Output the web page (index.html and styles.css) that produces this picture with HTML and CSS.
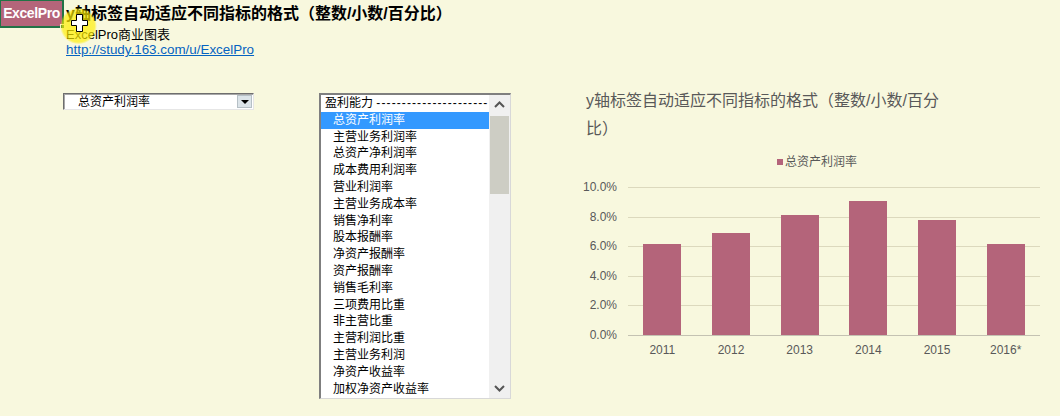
FILE: index.html
```html
<!DOCTYPE html>
<html lang="zh">
<head>
<meta charset="utf-8">
<title>ExcelPro</title>
<link rel="stylesheet" href="styles.css">
</head>
<body>
<div class="page">
  <header class="top">
    <div class="badge"><span>ExcelPro</span><i class="handle"></i></div>
    <div class="info">
      <div class="title">y轴标签自动适应不同指标的格式（整数/小数/百分比）</div>
      <div class="sub">ExcelPro商业图表</div>
      <a class="link" href="#">http://study.163.com/u/ExcelPro</a>
    </div>
    <div class="halo"></div>
    <svg class="cross" width="17" height="18" viewBox="0 0 17 18">
      <polygon points="5.5,0.5 11.5,0.5 11.5,6.5 16.5,6.5 16.5,11.5 11.5,11.5 11.5,17.5 5.5,17.5 5.5,11.5 0.5,11.5 0.5,6.5 5.5,6.5" fill="#fff" stroke="#000" stroke-width="1"/>
    </svg>
  </header>

  <main class="main">
    <div class="combo">
      <span class="combo-text">总资产利润率</span>
      <span class="combo-btn"><i class="tri"></i></span>
    </div>

    <div class="listbox">
      <ul class="items">
        <li class="group">盈利能力 <span class="dashes">----------------------</span></li>
        <li class="sel">总资产利润率</li>
        <li>主营业务利润率</li>
        <li>总资产净利润率</li>
        <li>成本费用利润率</li>
        <li>营业利润率</li>
        <li>主营业务成本率</li>
        <li>销售净利率</li>
        <li>股本报酬率</li>
        <li>净资产报酬率</li>
        <li>资产报酬率</li>
        <li>销售毛利率</li>
        <li>三项费用比重</li>
        <li>非主营比重</li>
        <li>主营利润比重</li>
        <li>主营业务利润</li>
        <li>净资产收益率</li>
        <li>加权净资产收益率</li>
      </ul>
      <div class="scroll">
        <div class="sbtn"><svg width="11" height="7" viewBox="0 0 11 7"><polyline points="1,6 5.5,1.5 10,6" fill="none" stroke="#555" stroke-width="2"/></svg></div>
        <div class="thumb"></div>
        <div class="track"></div>
        <div class="sbtn"><svg width="11" height="7" viewBox="0 0 11 7"><polyline points="1,1 5.5,5.5 10,1" fill="none" stroke="#555" stroke-width="2"/></svg></div>
      </div>
    </div>

    <section class="chart">
      <div class="ctitle">y轴标签自动适应不同指标的格式（整数/小数/百分<br>比）</div>
      <div class="legend"><i class="lsq"></i>总资产利润率</div>
      <div class="body">
        <div class="ylabels">
          <span>10.0%</span><span>8.0%</span><span>6.0%</span><span>4.0%</span><span>2.0%</span><span>0.0%</span>
        </div>
        <div class="plotcol">
          <div class="plot">
            <div class="grid"><div></div><div></div><div></div><div></div><div></div></div>
            <div class="bars">
              <div class="cat"><div class="bar" style="height:91px"></div></div>
              <div class="cat"><div class="bar" style="height:102px"></div></div>
              <div class="cat"><div class="bar" style="height:120px"></div></div>
              <div class="cat"><div class="bar" style="height:134px"></div></div>
              <div class="cat"><div class="bar" style="height:115px"></div></div>
              <div class="cat"><div class="bar" style="height:91px"></div></div>
            </div>
          </div>
          <div class="xlabels">
            <span>2011</span><span>2012</span><span>2013</span><span>2014</span><span>2015</span><span>2016*</span>
          </div>
        </div>
      </div>
    </section>
  </main>
</div>
</body>
</html>
```

FILE: styles.css
```css
* { box-sizing: border-box; }
html, body { margin: 0; padding: 0; }
body {
  background: #f8f8de;
  width: 1060px;
  height: 416px;
  overflow: hidden;
  font-family: "Liberation Sans", "Noto Sans CJK SC", sans-serif;
  color: #000;
}
.page { position: relative; }

/* header */
.top { position: relative; display: flex; align-items: flex-start; }
.badge {
  position: relative;
  width: 64px;
  height: 28px;
  background: #b4657a;
  border-right: 2px solid #217346;
  border-bottom: 2px solid #217346;
  border-top: 1px solid #217346;
  border-left: 1px solid #217346;
  color: #fff;
  font-weight: bold;
  font-size: 14px;
  letter-spacing: -0.4px;
  line-height: 25px;
  text-align: center;
}
.handle {
  position: absolute;
  right: -3px;
  bottom: -3px;
  width: 5px;
  height: 5px;
  background: #217346;
  border: 1px solid #f8f8de;
}
.info { margin-left: 2px; }
.title { font-size: 16px; font-weight: bold; line-height: 27px; white-space: nowrap; }
.sub { font-size: 13px; line-height: 15px; }
.link { display: block; font-size: 13.4px; line-height: 15px; color: #0563c1; text-decoration: underline; }
.halo {
  position: absolute;
  left: 60px;
  top: 8px;
  width: 37px;
  height: 36px;
  border-radius: 50%;
  background: radial-gradient(circle, rgba(255,238,0,0.8) 0%, rgba(255,238,0,0.65) 62%, rgba(255,238,0,0.0) 72%);
}
.cross { position: absolute; left: 71px; top: 14px; }

/* main row */
.main {
  display: flex;
  align-items: flex-start;
  margin-top: 36px;
  padding-left: 63px;
}

.combo {
  display: flex;
  align-items: center;
  justify-content: space-between;
  width: 191px;
  height: 17px;
  background: #fff;
  border: 1px solid;
  border-color: #6e6e6e #e6e6e6 #e6e6e6 #6e6e6e;
  box-shadow: inset 1px 1px 0 #a8a8a8;
  font-size: 12px;
  padding-left: 14px;
  padding-right: 1px;
}
.combo-text { line-height: 14px; }
.combo-btn {
  display: flex;
  align-items: center;
  justify-content: center;
  width: 15px;
  height: 13px;
  background: #dce4e9;
  border: 1px solid #b6c0c6;
}
.tri {
  width: 0; height: 0;
  border-left: 4px solid transparent;
  border-right: 4px solid transparent;
  border-top: 4px solid #000;
}

.listbox {
  display: flex;
  margin-left: 65px;
  width: 192px;
  height: 306px;
  background: #fff;
  border-top: 2px solid #7f7f7f;
  border-left: 2px solid #7f7f7f;
  border-right: 1px solid #d8d8d8;
  border-bottom: 1px solid #d8d8d8;
}
.items {
  list-style: none;
  margin: 0;
  padding: 0;
  width: 168px;
  overflow: hidden;
  font-size: 12px;
}
.items li {
  height: 16.8px;
  line-height: 16.8px;
  padding-left: 12px;
  white-space: nowrap;
  overflow: hidden;
}
.items li.group { padding-left: 4px; }
.dashes { letter-spacing: 1.1px; }
.items li.sel { background: #3399ff; color: #fff; }
.scroll {
  width: 21px;
  display: flex;
  flex-direction: column;
  background: #f0f0f0;
}
.sbtn {
  height: 19px;
  display: flex;
  align-items: center;
  justify-content: center;
}
.thumb { height: 78px; background: #cdcdc4; margin: 2px 1px 0 1px; }
.track { flex: 1; }

/* chart */
.chart {
  margin-left: 73px;
  margin-top: -6px;
  width: 476px;
  color: #595959;
}
.ctitle {
  padding-left: 2px;
  font-size: 16px;
  line-height: 28px;
  white-space: nowrap;
}
.legend {
  display: flex;
  align-items: center;
  margin-top: 12px;
  margin-left: 193px;
  font-size: 12px;
  line-height: 14px;
}
.lsq { width: 6px; height: 6px; background: #b4647a; margin-right: 2px; }
.body { display: flex; margin-top: 18px; }
.ylabels {
  width: 33px;
  height: 148px;
  margin-right: 11px;
  display: flex;
  flex-direction: column;
  justify-content: space-between;
  align-items: flex-end;
  font-size: 12px;
}
.ylabels span {
  height: 0;
  display: flex;
  align-items: center;
  line-height: 14px;
  white-space: nowrap;
}
.plotcol { width: 412px; }
.plot { display: grid; }
.grid, .bars { grid-area: 1 / 1; }
.grid { border-bottom: 1px solid #c4c2b2; }
.grid div { height: 29.6px; border-top: 1px solid #dcd9bd; }
.bars {
  display: flex;
  align-items: flex-end;
  height: 148px;
}
.cat { flex: 1; display: flex; justify-content: center; align-items: flex-end; }
.bar { width: 38px; background: #b4647a; }
.xlabels { display: flex; margin-top: 7px; font-size: 12px; line-height: 14px; }
.xlabels span { flex: 1; text-align: center; }
```
